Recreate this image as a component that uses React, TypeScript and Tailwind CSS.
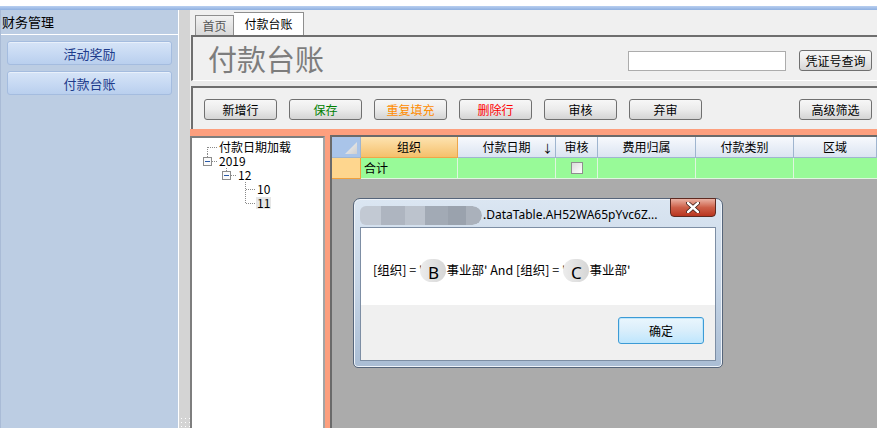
import React from "react";

const cjk = "font-['Noto_Sans_CJK_SC','Noto_Sans',sans-serif]";

function WinButton({
  label,
  color = "text-black",
}: {
  label: string;
  color?: string;
}) {
  return (
    <div
      className={`flex h-[21px] w-[73px] shrink-0 items-center justify-center rounded-[3px] border border-[#707070] bg-gradient-to-b from-[#f7f7f7] via-[#ebebeb] to-[#d4d4d4] text-[12px] leading-none ${color}`}
    >
      {label}
    </div>
  );
}

function NavButton({ label }: { label: string }) {
  return (
    <div className="flex h-[24px] items-center justify-center rounded-[3px] border border-[#a4bcdf] bg-gradient-to-b from-[#d6e4f7] via-[#c8daf3] to-[#b9cfee] text-[13px] leading-none text-[#1e3c8c] shadow-[inset_0_1px_0_#e8f0fb]">
      {label}
    </div>
  );
}

// one row of the tree connector drawing
function Connector({ kind }: { kind: "first" | "box-top" | "mid" | "last" }) {
  return (
    <svg width="17" height="14" className="shrink-0">
      <g stroke="#8a8a8a" strokeDasharray="1 1" fill="none">
        {kind === "first" && <line x1="7.5" y1="7" x2="7.5" y2="14" />}
        {kind === "box-top" && <line x1="7.5" y1="0" x2="7.5" y2="3" />}
        {kind === "mid" && <line x1="7.5" y1="0" x2="7.5" y2="14" />}
        {kind === "last" && <line x1="7.5" y1="0" x2="7.5" y2="7" />}
        {kind === "box-top" ? (
          <line x1="12" y1="7.5" x2="17" y2="7.5" />
        ) : (
          <line x1="8" y1="7.5" x2="17" y2="7.5" />
        )}
      </g>
      {kind === "box-top" && (
        <g>
          <rect x="3.5" y="3.5" width="8" height="8" fill="#fafafa" stroke="#8c8c8c" />
          <line x1="5" y1="7.5" x2="10" y2="7.5" stroke="#2a5aa8" />
        </g>
      )}
    </svg>
  );
}

function TreeRow({
  indent,
  kind,
  label,
  selected,
}: {
  indent: string;
  kind: "first" | "box-top" | "mid" | "last";
  label: string;
  selected?: boolean;
}) {
  return (
    <div className={`flex h-[14px] items-center ${indent}`}>
      <Connector kind={kind} />
      <span
        className={`ml-[1px] px-[1px] text-[12px] leading-[12px] text-black ${selected ? "bg-[#e6e6e6]" : ""}`}
      >
        {label}
      </span>
    </div>
  );
}

function HeadCell({
  label,
  w,
  arrow,
}: {
  label: string;
  w: string;
  arrow?: boolean;
}) {
  return (
    <div
      className={`relative flex h-full ${w} items-center justify-center border-r border-b border-[#9fb5cf] bg-gradient-to-b from-[#f7f9fd] to-[#dbe4f1] text-[12px]`}
    >
      {label}
      {arrow && <span className="absolute right-[2px] top-[3px] text-[11px]">↓</span>}
    </div>
  );
}

export default function App() {
  return (
    <div className={`flex h-[428px] w-[877px] flex-col overflow-hidden bg-white ${cjk}`}>
      <div className="h-[6px] bg-white" />
      <div className="h-[4px] bg-gradient-to-b from-[#b9cff0] to-[#8fb0e0]" />

      <div className="flex min-h-0 flex-1">
        {/* sidebar */}
        <div className="flex w-[178px] flex-col border-l border-[#a9bbd6] bg-[#bccde3]">
          <div className="flex h-[25px] items-center border-b border-white pl-[1px] text-[13px] text-black">
            财务管理
          </div>
          <div className="flex flex-col gap-[6px] px-[6px] pt-[6px]">
            <NavButton label="活动奖励" />
            <NavButton label="付款台账" />
          </div>
        </div>

        {/* splitter */}
        <div className="flex w-[12px] flex-col justify-end border-l border-white bg-[#d4d4d4] pb-[1px]">
          <div className="grid grid-cols-3 gap-[3px] pl-[2px]">
            {Array.from({ length: 9 }).map((_, i) => (
              <div key={i} className="h-[1px] w-[1px] bg-white" />
            ))}
          </div>
        </div>

        {/* main */}
        <div className="flex min-w-0 flex-1 flex-col bg-[#f0f0f0]">
          {/* tabs */}
          <div className="flex h-[25px] items-end pl-[5px]">
            <div className="flex h-[20px] w-[39px] items-center justify-center border border-b-0 border-[#8e8e8e] bg-gradient-to-b from-[#f2f2f2] to-[#d8d8d8] text-[12px] text-[#555]">
              首页
            </div>
            <div className="flex h-[23px] w-[70px] items-start justify-center border border-b-0 border-l-0 border-[#8e8e8e] bg-white pt-[2px] text-[12px] text-black">
              付款台账
            </div>
          </div>

          {/* title panel */}
          <div className="ml-[1px] flex h-[46px] items-center border-t-2 border-l-2 border-[#6e6e6e] border-b border-b-white pl-[15px] pr-[5px]">
            <div className="text-[29px] leading-none text-[#7d7d7d]">付款台账</div>
            <div className="ml-auto flex items-center gap-[13px] pt-[4px]">
              <div className="h-[20px] w-[158px] border border-[#acacac] bg-white" />
              <WinButton label="凭证号查询" />
            </div>
          </div>

          <div className="h-[5px] bg-[#eaeaea]" />

          {/* toolbar */}
          <div className="ml-[1px] flex h-[43px] items-start border-t-2 border-l-2 border-[#6e6e6e] pl-[11px] pr-[5px] pt-[11px]">
            <div className="flex gap-[12px]">
              <WinButton label="新增行" />
              <WinButton label="保存" color="text-[#008000]" />
              <WinButton label="重复填充" color="text-[#ff8c00]" />
              <WinButton label="删除行" color="text-[#ff0000]" />
              <WinButton label="审核" />
              <WinButton label="弃审" />
            </div>
            <div className="ml-auto">
              <WinButton label="高级筛选" />
            </div>
          </div>

          {/* bottom area */}
          <div className="flex min-h-0 flex-1 bg-[#fd9f7e] pt-[6px]">
            {/* tree */}
            <div className="mt-[1px] w-[135px] shrink-0 border-t-2 border-l-2 border-r-2 border-[#7e7e7e] border-r-[#a4a4a4] bg-white pt-[2px]">
              <TreeRow indent="pl-[8px]" kind="first" label="付款日期加载" />
              <TreeRow indent="pl-[8px]" kind="box-top" label="2019" />
              <TreeRow indent="pl-[27px]" kind="box-top" label="12" />
              <TreeRow indent="pl-[46px]" kind="mid" label="10" />
              <TreeRow indent="pl-[46px]" kind="last" label="11" selected />
            </div>

            <div className="w-[5px] shrink-0" />

            {/* grid */}
            <div className="relative min-w-0 flex-1 border-t-2 border-l-2 border-[#6a6a6a] bg-[#ababab]">
              <div className="flex h-[21px]">
                <div className="flex h-full w-[29px] shrink-0 items-end justify-end border-r border-b border-[#9fb5cf] bg-[#a9c4e9] pb-[3px] pr-[3px]">
                  <svg width="12" height="12">
                    <defs>
                      <linearGradient id="tri" x1="0" y1="0" x2="1" y2="1">
                        <stop offset="0" stopColor="#f4f4f4" />
                        <stop offset="1" stopColor="#cfcfcf" />
                      </linearGradient>
                    </defs>
                    <polygon points="12,0 12,12 0,12" fill="url(#tri)" />
                  </svg>
                </div>
                <div className="flex h-full w-[97px] shrink-0 items-center justify-center border-r border-b border-[#eea64a] bg-gradient-to-b from-[#fde3b0] to-[#f5c06a] text-[12px]">
                  组织
                </div>
                <HeadCell label="付款日期" w="w-[98px] shrink-0" arrow />
                <HeadCell label="审核" w="w-[42px] shrink-0" />
                <HeadCell label="费用归属" w="w-[98px] shrink-0" />
                <HeadCell label="付款类别" w="w-[98px] shrink-0" />
                <HeadCell label="区域" w="flex-1" />
              </div>
              <div className="flex h-[21px]">
                <div className="h-full w-[29px] shrink-0 border-r border-b border-[#f2a13c] bg-[#fed68e]" />
                <div className="flex h-full w-[97px] shrink-0 items-center border-r border-b border-[#dff5df] bg-[#98fa98] pl-[3px] text-[12px]">
                  合计
                </div>
                <div className="h-full w-[98px] shrink-0 border-r border-b border-[#dff5df] bg-[#98fa98]" />
                <div className="flex h-full w-[42px] shrink-0 items-center justify-center border-r border-b border-[#dff5df] bg-[#98fa98]">
                  <div className="h-[12px] w-[12px] border border-[#8f8f8f] bg-gradient-to-br from-[#dcdcdc] to-white" />
                </div>
                <div className="h-full w-[98px] shrink-0 border-r border-b border-[#dff5df] bg-[#98fa98]" />
                <div className="h-full w-[98px] shrink-0 border-r border-b border-[#dff5df] bg-[#98fa98]" />
                <div className="h-full flex-1 border-b border-[#dff5df] bg-[#98fa98]" />
              </div>

              {/* message box */}
              <div className="absolute left-[21px] top-[61px] flex h-[170px] w-[370px] flex-col rounded-t-[7px] rounded-b-[5px] border border-[#56657a] bg-gradient-to-b from-[#dbe6f2] via-[#c6d5e6] to-[#aabdd4] px-[6px] pb-[6px] shadow-[inset_0_0_0_1px_#eef3f9]">
                <div className="relative flex h-[28px] items-center pt-[4px]">
                  <div className="flex h-[19px] items-center overflow-hidden rounded-r-full">
                    <div className="h-full w-[21px] rounded-l-[6px] bg-[#c2c9d3]" />
                    <div className="h-full w-[24px] bg-[#aeb5c0]" />
                    <div className="h-full w-[20px] bg-[#bcc3cd]" />
                    <div className="h-full w-[23px] bg-[#a2aab5]" />
                    <div className="h-full w-[18px] bg-[#9aa2ad]" />
                    <div className="h-full w-[16px] rounded-r-full bg-[#aab1bb]" />
                  </div>
                  <span className="ml-[1px] font-['Noto_Sans',sans-serif] text-[12px] leading-none text-black">
                    .DataTable.AH52WA65pYvc6Z...
                  </span>
                  <div className="absolute right-[0px] top-[-1px] flex h-[19px] w-[46px] items-center justify-center rounded-b-[4px] border border-[#5e2a21] bg-gradient-to-b from-[#e9b2a4] via-[#cd5f48] to-[#b9341e]">
                    <svg width="14" height="11" viewBox="0 0 14 11">
                      <path
                        d="M2 1 L12 10 M12 1 L2 10"
                        stroke="#3b1a14"
                        strokeWidth="4"
                        strokeLinecap="round"
                      />
                      <path
                        d="M2 1 L12 10 M12 1 L2 10"
                        stroke="#ffffff"
                        strokeWidth="2.4"
                        strokeLinecap="round"
                      />
                    </svg>
                  </div>
                </div>
                <div className="flex flex-1 flex-col border border-[#7d8ea4]">
                  <div className="flex h-[77px] items-start bg-white pl-[12px] pt-[31px]">
                    <div className="flex items-center text-[12.5px] leading-none text-black">
                      <span>[组织] = '</span>
                      <span className="-ml-[2px] flex h-[23px] w-[26px] items-center justify-center rounded-full bg-gradient-to-r from-[#ececec] to-[#d6d6d6] pt-[3px] font-['Noto_Sans',sans-serif] text-[17px] text-black">
                        B
                      </span>
                      <span>事业部' And [组织] = '</span>
                      <span className="-ml-[2px] flex h-[23px] w-[26px] items-center justify-center rounded-full bg-gradient-to-r from-[#ececec] to-[#d6d6d6] pt-[3px] font-['Noto_Sans',sans-serif] text-[17px] text-black">
                        C
                      </span>
                      <span>事业部'</span>
                    </div>
                  </div>
                  <div className="flex flex-1 items-start justify-end bg-[#f0f0f0] pr-[11px] pt-[12px]">
                    <div className="flex h-[27px] w-[86px] items-center justify-center rounded-[3px] border border-[#3c9bd6] bg-gradient-to-b from-[#eaf6fd] via-[#d9eefb] to-[#bee6fd] text-[12px] text-black shadow-[inset_0_0_0_1px_#bfe6fb]">
                      确定
                    </div>
                  </div>
                </div>
              </div>
            </div>
          </div>
        </div>
      </div>
    </div>
  );
}
